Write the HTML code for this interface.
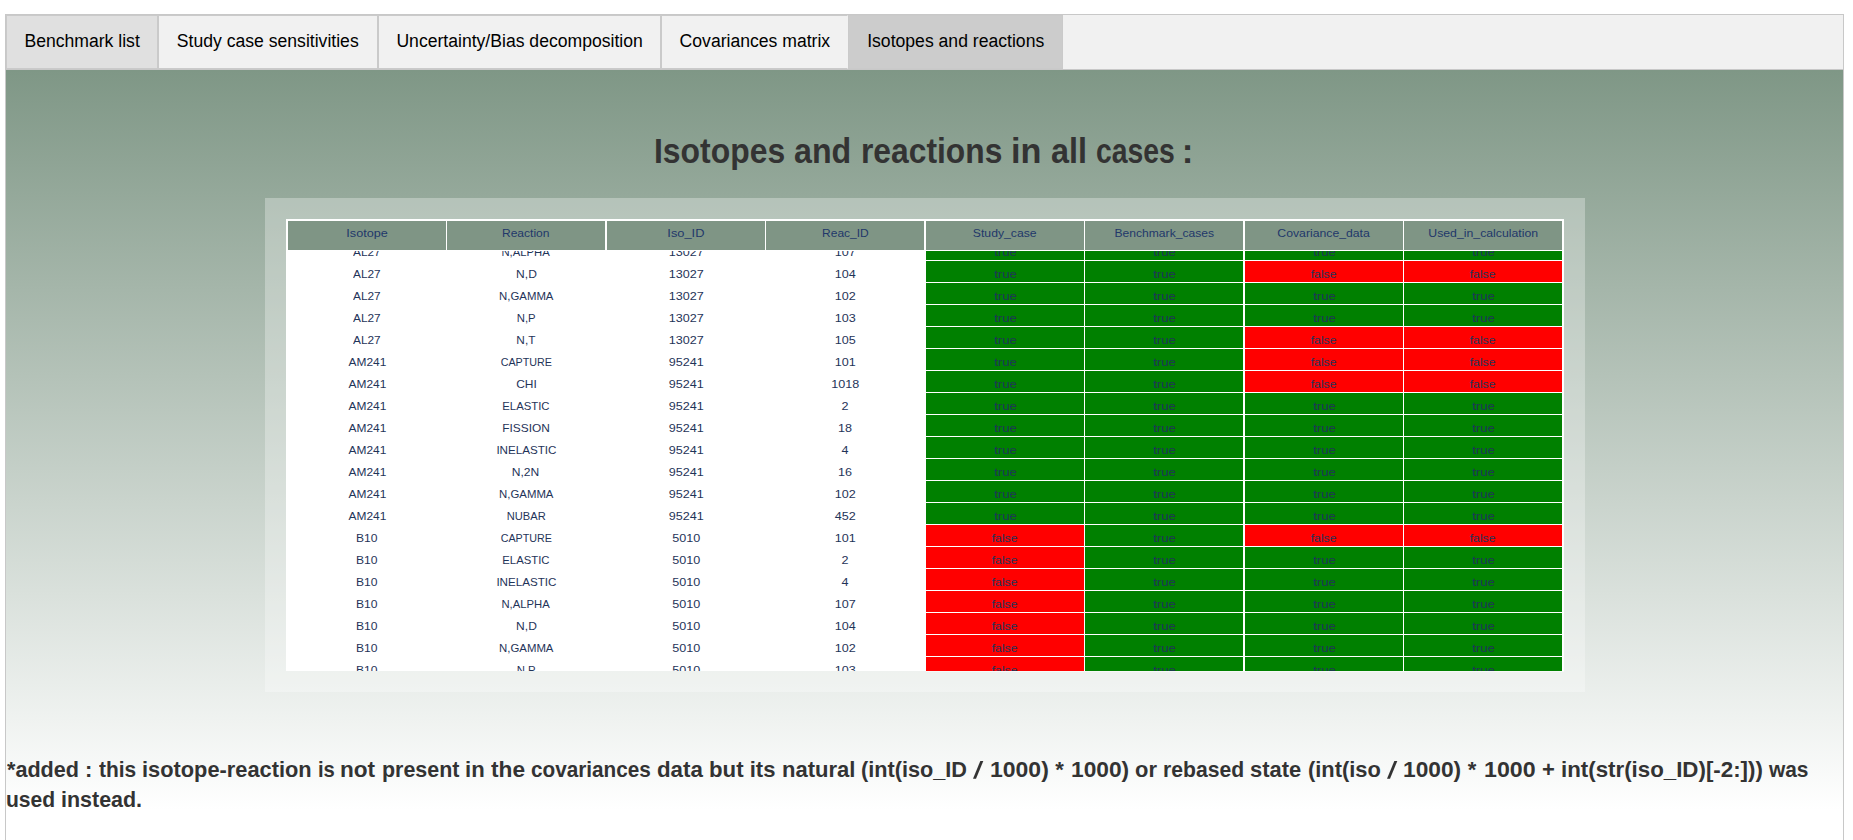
<!DOCTYPE html>
<html><head><meta charset="utf-8"><title>Isotopes and reactions</title>
<style>
html,body{margin:0;padding:0;background:#fff;}
body{width:1853px;height:840px;overflow:hidden;position:relative;font-family:"Liberation Sans",sans-serif;}
.tabbar{position:absolute;left:5px;top:14px;width:1839px;height:56px;box-sizing:border-box;border:1px solid #c8c8c8;background:#f1f1f1;}
.tab{position:absolute;top:0;height:54px;font-size:17.6px;color:#000;line-height:50px;box-sizing:border-box;border:1px solid #cacaca;white-space:nowrap;}
.act{background:#cccccc;}
.content{position:absolute;left:5px;top:70px;width:1839px;height:800px;box-sizing:border-box;border-left:1px solid #c8c8c8;border-right:1px solid #c8c8c8;background:linear-gradient(to bottom,#7f9786 0px,#ffffff 740px);}
.wrap{position:absolute;left:265px;top:198px;width:1320px;height:494px;background:rgba(255,255,255,0.3);}
.table{position:absolute;left:286px;top:219px;width:1278px;height:452px;background:#fff;}
.th{position:absolute;top:2px;height:29px;line-height:25px;background:#7f9585;color:#22386a;font-size:11px;text-align:center;white-space:nowrap;}
.th span,.td span{display:inline-block;}
.tbody{position:absolute;left:0;top:32px;width:1278px;height:420px;overflow:hidden;}
.fl{position:absolute;left:926px;top:671px;width:638px;height:1px;background:rgba(255,255,255,0.5);}
.td{position:absolute;height:21px;line-height:27px;color:#1f3459;font-size:11px;text-align:center;white-space:nowrap;overflow:hidden;}
.g{background:#008000;}
.r{background:#ff0000;}
.sl{position:absolute;}
.w{position:absolute;white-space:pre;font-weight:bold;color:#333;line-height:30px;transform-origin:0 0;}
</style></head><body>
<div class="tabbar">
 <div class="tab" style="left:0;width:152px;background:#e0e0e0;padding-left:17.4px">Benchmark list</div>
 <div class="tab" style="left:152px;width:220px;padding-left:17.8px">Study case sensitivities</div>
 <div class="tab" style="left:372px;width:283px;padding-left:17.4px">Uncertainty/Bias decomposition</div>
 <div class="tab" style="left:655px;width:187px;padding-left:17.6px;border-right-color:#f1f1f1">Covariances matrix</div>
 <div class="tab act" style="left:842px;width:215px;padding-left:18.2px">Isotopes and reactions</div>
</div>
<div class="content"></div>
<span class="w" style="left:654.37px;top:136px;font-size:35px;transform:scaleX(0.9112)">Isotopes</span><span class="w" style="left:794.36px;top:136px;font-size:35px;transform:scaleX(0.9190)">and</span><span class="w" style="left:860.50px;top:136px;font-size:35px;transform:scaleX(0.9083)">reactions</span><span class="w" style="left:1010.51px;top:136px;font-size:35px;transform:scaleX(0.9795)">in</span><span class="w" style="left:1050.55px;top:136px;font-size:35px;transform:scaleX(0.9249)">all</span><span class="w" style="left:1095.69px;top:136px;font-size:35px;transform:scaleX(0.8106)">cases</span><span class="w" style="left:1181.83px;top:136px;font-size:35px;transform:scaleX(1.0000)">:</span>
<div class="wrap"></div><div class="fl"></div>
<div class="table">
<div class="th" style="left:2px;width:158px"><span style="transform:scaleX(1.149)">Isotope</span></div><div class="th" style="left:161px;width:158px"><span style="transform:scaleX(1.095)">Reaction</span></div><div class="th" style="left:321px;width:158px"><span style="transform:scaleX(1.168)">Iso_ID</span></div><div class="th" style="left:480px;width:158px"><span style="transform:scaleX(1.090)">Reac_ID</span></div><div class="th" style="left:640px;width:158px"><span style="transform:scaleX(1.110)">Study_case</span></div><div class="th" style="left:799px;width:158px"><span style="transform:scaleX(1.101)">Benchmark_cases</span></div><div class="th" style="left:959px;width:158px"><span style="transform:scaleX(1.112)">Covariance_data</span></div><div class="th" style="left:1118px;width:158px"><span style="transform:scaleX(1.116)">Used_in_calculation</span></div>
<div class="tbody">
<div class="td" style="left:2px;top:-12px;width:158px"><span style="transform:scaleX(1.076)">AL27</span></div><div class="td" style="left:161px;top:-12px;width:158px"><span style="transform:scaleX(1.026)">N,ALPHA</span></div><div class="td" style="left:321px;top:-12px;width:158px"><span style="transform:scaleX(1.144)">13027</span></div><div class="td" style="left:480px;top:-12px;width:158px"><span style="transform:scaleX(1.144)">107</span></div><div class="td g" style="left:640px;top:-12px;width:158px"><span style="transform:scaleX(1.190)">true</span></div><div class="td g" style="left:799px;top:-12px;width:158px"><span style="transform:scaleX(1.190)">true</span></div><div class="td g" style="left:959px;top:-12px;width:158px"><span style="transform:scaleX(1.190)">true</span></div><div class="td g" style="left:1118px;top:-12px;width:158px"><span style="transform:scaleX(1.190)">true</span></div><div class="td" style="left:2px;top:10px;width:158px"><span style="transform:scaleX(1.076)">AL27</span></div><div class="td" style="left:161px;top:10px;width:158px"><span style="transform:scaleX(1.093)">N,D</span></div><div class="td" style="left:321px;top:10px;width:158px"><span style="transform:scaleX(1.144)">13027</span></div><div class="td" style="left:480px;top:10px;width:158px"><span style="transform:scaleX(1.144)">104</span></div><div class="td g" style="left:640px;top:10px;width:158px"><span style="transform:scaleX(1.190)">true</span></div><div class="td g" style="left:799px;top:10px;width:158px"><span style="transform:scaleX(1.190)">true</span></div><div class="td r" style="left:959px;top:10px;width:158px"><span style="transform:scaleX(1.110)">false</span></div><div class="td r" style="left:1118px;top:10px;width:158px"><span style="transform:scaleX(1.110)">false</span></div><div class="td" style="left:2px;top:32px;width:158px"><span style="transform:scaleX(1.076)">AL27</span></div><div class="td" style="left:161px;top:32px;width:158px"><span style="transform:scaleX(1.034)">N,GAMMA</span></div><div class="td" style="left:321px;top:32px;width:158px"><span style="transform:scaleX(1.144)">13027</span></div><div class="td" style="left:480px;top:32px;width:158px"><span style="transform:scaleX(1.144)">102</span></div><div class="td g" style="left:640px;top:32px;width:158px"><span style="transform:scaleX(1.190)">true</span></div><div class="td g" style="left:799px;top:32px;width:158px"><span style="transform:scaleX(1.190)">true</span></div><div class="td g" style="left:959px;top:32px;width:158px"><span style="transform:scaleX(1.190)">true</span></div><div class="td g" style="left:1118px;top:32px;width:158px"><span style="transform:scaleX(1.190)">true</span></div><div class="td" style="left:2px;top:54px;width:158px"><span style="transform:scaleX(1.076)">AL27</span></div><div class="td" style="left:161px;top:54px;width:158px"><span style="transform:scaleX(1.029)">N,P</span></div><div class="td" style="left:321px;top:54px;width:158px"><span style="transform:scaleX(1.144)">13027</span></div><div class="td" style="left:480px;top:54px;width:158px"><span style="transform:scaleX(1.144)">103</span></div><div class="td g" style="left:640px;top:54px;width:158px"><span style="transform:scaleX(1.190)">true</span></div><div class="td g" style="left:799px;top:54px;width:158px"><span style="transform:scaleX(1.190)">true</span></div><div class="td g" style="left:959px;top:54px;width:158px"><span style="transform:scaleX(1.190)">true</span></div><div class="td g" style="left:1118px;top:54px;width:158px"><span style="transform:scaleX(1.190)">true</span></div><div class="td" style="left:2px;top:76px;width:158px"><span style="transform:scaleX(1.076)">AL27</span></div><div class="td" style="left:161px;top:76px;width:158px"><span style="transform:scaleX(1.073)">N,T</span></div><div class="td" style="left:321px;top:76px;width:158px"><span style="transform:scaleX(1.144)">13027</span></div><div class="td" style="left:480px;top:76px;width:158px"><span style="transform:scaleX(1.144)">105</span></div><div class="td g" style="left:640px;top:76px;width:158px"><span style="transform:scaleX(1.190)">true</span></div><div class="td g" style="left:799px;top:76px;width:158px"><span style="transform:scaleX(1.190)">true</span></div><div class="td r" style="left:959px;top:76px;width:158px"><span style="transform:scaleX(1.110)">false</span></div><div class="td r" style="left:1118px;top:76px;width:158px"><span style="transform:scaleX(1.110)">false</span></div><div class="td" style="left:2px;top:98px;width:158px"><span style="transform:scaleX(1.084)">AM241</span></div><div class="td" style="left:161px;top:98px;width:158px"><span style="transform:scaleX(0.975)">CAPTURE</span></div><div class="td" style="left:321px;top:98px;width:158px"><span style="transform:scaleX(1.144)">95241</span></div><div class="td" style="left:480px;top:98px;width:158px"><span style="transform:scaleX(1.144)">101</span></div><div class="td g" style="left:640px;top:98px;width:158px"><span style="transform:scaleX(1.190)">true</span></div><div class="td g" style="left:799px;top:98px;width:158px"><span style="transform:scaleX(1.190)">true</span></div><div class="td r" style="left:959px;top:98px;width:158px"><span style="transform:scaleX(1.110)">false</span></div><div class="td r" style="left:1118px;top:98px;width:158px"><span style="transform:scaleX(1.110)">false</span></div><div class="td" style="left:2px;top:120px;width:158px"><span style="transform:scaleX(1.084)">AM241</span></div><div class="td" style="left:161px;top:120px;width:158px"><span style="transform:scaleX(1.086)">CHI</span></div><div class="td" style="left:321px;top:120px;width:158px"><span style="transform:scaleX(1.144)">95241</span></div><div class="td" style="left:480px;top:120px;width:158px"><span style="transform:scaleX(1.144)">1018</span></div><div class="td g" style="left:640px;top:120px;width:158px"><span style="transform:scaleX(1.190)">true</span></div><div class="td g" style="left:799px;top:120px;width:158px"><span style="transform:scaleX(1.190)">true</span></div><div class="td r" style="left:959px;top:120px;width:158px"><span style="transform:scaleX(1.110)">false</span></div><div class="td r" style="left:1118px;top:120px;width:158px"><span style="transform:scaleX(1.110)">false</span></div><div class="td" style="left:2px;top:142px;width:158px"><span style="transform:scaleX(1.084)">AM241</span></div><div class="td" style="left:161px;top:142px;width:158px"><span style="transform:scaleX(1.030)">ELASTIC</span></div><div class="td" style="left:321px;top:142px;width:158px"><span style="transform:scaleX(1.144)">95241</span></div><div class="td" style="left:480px;top:142px;width:158px"><span style="transform:scaleX(1.144)">2</span></div><div class="td g" style="left:640px;top:142px;width:158px"><span style="transform:scaleX(1.190)">true</span></div><div class="td g" style="left:799px;top:142px;width:158px"><span style="transform:scaleX(1.190)">true</span></div><div class="td g" style="left:959px;top:142px;width:158px"><span style="transform:scaleX(1.190)">true</span></div><div class="td g" style="left:1118px;top:142px;width:158px"><span style="transform:scaleX(1.190)">true</span></div><div class="td" style="left:2px;top:164px;width:158px"><span style="transform:scaleX(1.084)">AM241</span></div><div class="td" style="left:161px;top:164px;width:158px"><span style="transform:scaleX(1.080)">FISSION</span></div><div class="td" style="left:321px;top:164px;width:158px"><span style="transform:scaleX(1.144)">95241</span></div><div class="td" style="left:480px;top:164px;width:158px"><span style="transform:scaleX(1.144)">18</span></div><div class="td g" style="left:640px;top:164px;width:158px"><span style="transform:scaleX(1.190)">true</span></div><div class="td g" style="left:799px;top:164px;width:158px"><span style="transform:scaleX(1.190)">true</span></div><div class="td g" style="left:959px;top:164px;width:158px"><span style="transform:scaleX(1.190)">true</span></div><div class="td g" style="left:1118px;top:164px;width:158px"><span style="transform:scaleX(1.190)">true</span></div><div class="td" style="left:2px;top:186px;width:158px"><span style="transform:scaleX(1.084)">AM241</span></div><div class="td" style="left:161px;top:186px;width:158px"><span style="transform:scaleX(1.057)">INELASTIC</span></div><div class="td" style="left:321px;top:186px;width:158px"><span style="transform:scaleX(1.144)">95241</span></div><div class="td" style="left:480px;top:186px;width:158px"><span style="transform:scaleX(1.144)">4</span></div><div class="td g" style="left:640px;top:186px;width:158px"><span style="transform:scaleX(1.190)">true</span></div><div class="td g" style="left:799px;top:186px;width:158px"><span style="transform:scaleX(1.190)">true</span></div><div class="td g" style="left:959px;top:186px;width:158px"><span style="transform:scaleX(1.190)">true</span></div><div class="td g" style="left:1118px;top:186px;width:158px"><span style="transform:scaleX(1.190)">true</span></div><div class="td" style="left:2px;top:208px;width:158px"><span style="transform:scaleX(1.084)">AM241</span></div><div class="td" style="left:161px;top:208px;width:158px"><span style="transform:scaleX(1.096)">N,2N</span></div><div class="td" style="left:321px;top:208px;width:158px"><span style="transform:scaleX(1.144)">95241</span></div><div class="td" style="left:480px;top:208px;width:158px"><span style="transform:scaleX(1.144)">16</span></div><div class="td g" style="left:640px;top:208px;width:158px"><span style="transform:scaleX(1.190)">true</span></div><div class="td g" style="left:799px;top:208px;width:158px"><span style="transform:scaleX(1.190)">true</span></div><div class="td g" style="left:959px;top:208px;width:158px"><span style="transform:scaleX(1.190)">true</span></div><div class="td g" style="left:1118px;top:208px;width:158px"><span style="transform:scaleX(1.190)">true</span></div><div class="td" style="left:2px;top:230px;width:158px"><span style="transform:scaleX(1.084)">AM241</span></div><div class="td" style="left:161px;top:230px;width:158px"><span style="transform:scaleX(1.034)">N,GAMMA</span></div><div class="td" style="left:321px;top:230px;width:158px"><span style="transform:scaleX(1.144)">95241</span></div><div class="td" style="left:480px;top:230px;width:158px"><span style="transform:scaleX(1.144)">102</span></div><div class="td g" style="left:640px;top:230px;width:158px"><span style="transform:scaleX(1.190)">true</span></div><div class="td g" style="left:799px;top:230px;width:158px"><span style="transform:scaleX(1.190)">true</span></div><div class="td g" style="left:959px;top:230px;width:158px"><span style="transform:scaleX(1.190)">true</span></div><div class="td g" style="left:1118px;top:230px;width:158px"><span style="transform:scaleX(1.190)">true</span></div><div class="td" style="left:2px;top:252px;width:158px"><span style="transform:scaleX(1.084)">AM241</span></div><div class="td" style="left:161px;top:252px;width:158px"><span style="transform:scaleX(1.013)">NUBAR</span></div><div class="td" style="left:321px;top:252px;width:158px"><span style="transform:scaleX(1.144)">95241</span></div><div class="td" style="left:480px;top:252px;width:158px"><span style="transform:scaleX(1.144)">452</span></div><div class="td g" style="left:640px;top:252px;width:158px"><span style="transform:scaleX(1.190)">true</span></div><div class="td g" style="left:799px;top:252px;width:158px"><span style="transform:scaleX(1.190)">true</span></div><div class="td g" style="left:959px;top:252px;width:158px"><span style="transform:scaleX(1.190)">true</span></div><div class="td g" style="left:1118px;top:252px;width:158px"><span style="transform:scaleX(1.190)">true</span></div><div class="td" style="left:2px;top:274px;width:158px"><span style="transform:scaleX(1.100)">B10</span></div><div class="td" style="left:161px;top:274px;width:158px"><span style="transform:scaleX(0.975)">CAPTURE</span></div><div class="td" style="left:321px;top:274px;width:158px"><span style="transform:scaleX(1.144)">5010</span></div><div class="td" style="left:480px;top:274px;width:158px"><span style="transform:scaleX(1.144)">101</span></div><div class="td r" style="left:640px;top:274px;width:158px"><span style="transform:scaleX(1.110)">false</span></div><div class="td g" style="left:799px;top:274px;width:158px"><span style="transform:scaleX(1.190)">true</span></div><div class="td r" style="left:959px;top:274px;width:158px"><span style="transform:scaleX(1.110)">false</span></div><div class="td r" style="left:1118px;top:274px;width:158px"><span style="transform:scaleX(1.110)">false</span></div><div class="td" style="left:2px;top:296px;width:158px"><span style="transform:scaleX(1.100)">B10</span></div><div class="td" style="left:161px;top:296px;width:158px"><span style="transform:scaleX(1.030)">ELASTIC</span></div><div class="td" style="left:321px;top:296px;width:158px"><span style="transform:scaleX(1.144)">5010</span></div><div class="td" style="left:480px;top:296px;width:158px"><span style="transform:scaleX(1.144)">2</span></div><div class="td r" style="left:640px;top:296px;width:158px"><span style="transform:scaleX(1.110)">false</span></div><div class="td g" style="left:799px;top:296px;width:158px"><span style="transform:scaleX(1.190)">true</span></div><div class="td g" style="left:959px;top:296px;width:158px"><span style="transform:scaleX(1.190)">true</span></div><div class="td g" style="left:1118px;top:296px;width:158px"><span style="transform:scaleX(1.190)">true</span></div><div class="td" style="left:2px;top:318px;width:158px"><span style="transform:scaleX(1.100)">B10</span></div><div class="td" style="left:161px;top:318px;width:158px"><span style="transform:scaleX(1.057)">INELASTIC</span></div><div class="td" style="left:321px;top:318px;width:158px"><span style="transform:scaleX(1.144)">5010</span></div><div class="td" style="left:480px;top:318px;width:158px"><span style="transform:scaleX(1.144)">4</span></div><div class="td r" style="left:640px;top:318px;width:158px"><span style="transform:scaleX(1.110)">false</span></div><div class="td g" style="left:799px;top:318px;width:158px"><span style="transform:scaleX(1.190)">true</span></div><div class="td g" style="left:959px;top:318px;width:158px"><span style="transform:scaleX(1.190)">true</span></div><div class="td g" style="left:1118px;top:318px;width:158px"><span style="transform:scaleX(1.190)">true</span></div><div class="td" style="left:2px;top:340px;width:158px"><span style="transform:scaleX(1.100)">B10</span></div><div class="td" style="left:161px;top:340px;width:158px"><span style="transform:scaleX(1.026)">N,ALPHA</span></div><div class="td" style="left:321px;top:340px;width:158px"><span style="transform:scaleX(1.144)">5010</span></div><div class="td" style="left:480px;top:340px;width:158px"><span style="transform:scaleX(1.144)">107</span></div><div class="td r" style="left:640px;top:340px;width:158px"><span style="transform:scaleX(1.110)">false</span></div><div class="td g" style="left:799px;top:340px;width:158px"><span style="transform:scaleX(1.190)">true</span></div><div class="td g" style="left:959px;top:340px;width:158px"><span style="transform:scaleX(1.190)">true</span></div><div class="td g" style="left:1118px;top:340px;width:158px"><span style="transform:scaleX(1.190)">true</span></div><div class="td" style="left:2px;top:362px;width:158px"><span style="transform:scaleX(1.100)">B10</span></div><div class="td" style="left:161px;top:362px;width:158px"><span style="transform:scaleX(1.093)">N,D</span></div><div class="td" style="left:321px;top:362px;width:158px"><span style="transform:scaleX(1.144)">5010</span></div><div class="td" style="left:480px;top:362px;width:158px"><span style="transform:scaleX(1.144)">104</span></div><div class="td r" style="left:640px;top:362px;width:158px"><span style="transform:scaleX(1.110)">false</span></div><div class="td g" style="left:799px;top:362px;width:158px"><span style="transform:scaleX(1.190)">true</span></div><div class="td g" style="left:959px;top:362px;width:158px"><span style="transform:scaleX(1.190)">true</span></div><div class="td g" style="left:1118px;top:362px;width:158px"><span style="transform:scaleX(1.190)">true</span></div><div class="td" style="left:2px;top:384px;width:158px"><span style="transform:scaleX(1.100)">B10</span></div><div class="td" style="left:161px;top:384px;width:158px"><span style="transform:scaleX(1.034)">N,GAMMA</span></div><div class="td" style="left:321px;top:384px;width:158px"><span style="transform:scaleX(1.144)">5010</span></div><div class="td" style="left:480px;top:384px;width:158px"><span style="transform:scaleX(1.144)">102</span></div><div class="td r" style="left:640px;top:384px;width:158px"><span style="transform:scaleX(1.110)">false</span></div><div class="td g" style="left:799px;top:384px;width:158px"><span style="transform:scaleX(1.190)">true</span></div><div class="td g" style="left:959px;top:384px;width:158px"><span style="transform:scaleX(1.190)">true</span></div><div class="td g" style="left:1118px;top:384px;width:158px"><span style="transform:scaleX(1.190)">true</span></div><div class="td" style="left:2px;top:406px;width:158px"><span style="transform:scaleX(1.100)">B10</span></div><div class="td" style="left:161px;top:406px;width:158px"><span style="transform:scaleX(1.029)">N,P</span></div><div class="td" style="left:321px;top:406px;width:158px"><span style="transform:scaleX(1.144)">5010</span></div><div class="td" style="left:480px;top:406px;width:158px"><span style="transform:scaleX(1.144)">103</span></div><div class="td r" style="left:640px;top:406px;width:158px"><span style="transform:scaleX(1.110)">false</span></div><div class="td g" style="left:799px;top:406px;width:158px"><span style="transform:scaleX(1.190)">true</span></div><div class="td g" style="left:959px;top:406px;width:158px"><span style="transform:scaleX(1.190)">true</span></div><div class="td g" style="left:1118px;top:406px;width:158px"><span style="transform:scaleX(1.190)">true</span></div>
</div>
</div>
<span class="w" style="left:6.94px;top:755px;font-size:22px;transform:scaleX(0.9815)">*added</span><span class="w" style="left:84.88px;top:755px;font-size:22px;transform:scaleX(1.0000)">:</span><span class="w" style="left:99.34px;top:755px;font-size:22px;transform:scaleX(0.9507)">this</span><span class="w" style="left:142.28px;top:755px;font-size:22px;transform:scaleX(0.9913)">isotope-reaction</span><span class="w" style="left:318.09px;top:755px;font-size:22px;transform:scaleX(0.9190)">is</span><span class="w" style="left:340.41px;top:755px;font-size:22px;transform:scaleX(1.0269)">not</span><span class="w" style="left:381.89px;top:755px;font-size:22px;transform:scaleX(0.9747)">present</span><span class="w" style="left:465.26px;top:755px;font-size:22px;transform:scaleX(1.0043)">in</span><span class="w" style="left:491.02px;top:755px;font-size:22px;transform:scaleX(1.0327)">the</span><span class="w" style="left:531.49px;top:755px;font-size:22px;transform:scaleX(0.9419)">covariances</span><span class="w" style="left:656.99px;top:755px;font-size:22px;transform:scaleX(1.0136)">data</span><span class="w" style="left:709.04px;top:755px;font-size:22px;transform:scaleX(1.0099)">but</span><span class="w" style="left:749.76px;top:755px;font-size:22px;transform:scaleX(1.0000)">its</span><span class="w" style="left:781.55px;top:755px;font-size:22px;transform:scaleX(1.0012)">natural</span><span class="w" style="left:861.12px;top:755px;font-size:22px;transform:scaleX(0.9851)">(int(iso_ID</span><svg class="sl" style="left:972.30px;top:760px" width="14" height="20" viewBox="0 0 14 20"><polygon points="1,18.7 4,18.7 11.3,1 8.3,1" fill="#333"/></svg><span class="w" style="left:990.15px;top:755px;font-size:22px;transform:scaleX(1.0449)">1000)</span><span class="w" style="left:1055.34px;top:755px;font-size:22px;transform:scaleX(1.0000)">*</span><span class="w" style="left:1070.77px;top:755px;font-size:22px;transform:scaleX(1.0331)">1000)</span><span class="w" style="left:1135.24px;top:755px;font-size:22px;transform:scaleX(0.9964)">or</span><span class="w" style="left:1163.31px;top:755px;font-size:22px;transform:scaleX(0.9609)">rebased</span><span class="w" style="left:1250.23px;top:755px;font-size:22px;transform:scaleX(0.9967)">state</span><span class="w" style="left:1307.51px;top:755px;font-size:22px;transform:scaleX(0.9930)">(int(iso</span><svg class="sl" style="left:1385.60px;top:760px" width="14" height="20" viewBox="0 0 14 20"><polygon points="1,18.7 4,18.7 11.3,1 8.3,1" fill="#333"/></svg><span class="w" style="left:1403.17px;top:755px;font-size:22px;transform:scaleX(1.0334)">1000)</span><span class="w" style="left:1467.64px;top:755px;font-size:22px;transform:scaleX(1.0000)">*</span><span class="w" style="left:1483.74px;top:755px;font-size:22px;transform:scaleX(1.0551)">1000</span><span class="w" style="left:1541.88px;top:755px;font-size:22px;transform:scaleX(1.0000)">+</span><span class="w" style="left:1561.04px;top:755px;font-size:22px;transform:scaleX(1.0132)">int(str(iso_ID)[-2:]))</span><span class="w" style="left:1769.06px;top:755px;font-size:22px;transform:scaleX(0.9498)">was</span><span class="w" style="left:5.69px;top:785px;font-size:22px;transform:scaleX(0.9578)">used</span><span class="w" style="left:60.70px;top:785px;font-size:22px;transform:scaleX(0.9752)">instead.</span>
</body></html>
